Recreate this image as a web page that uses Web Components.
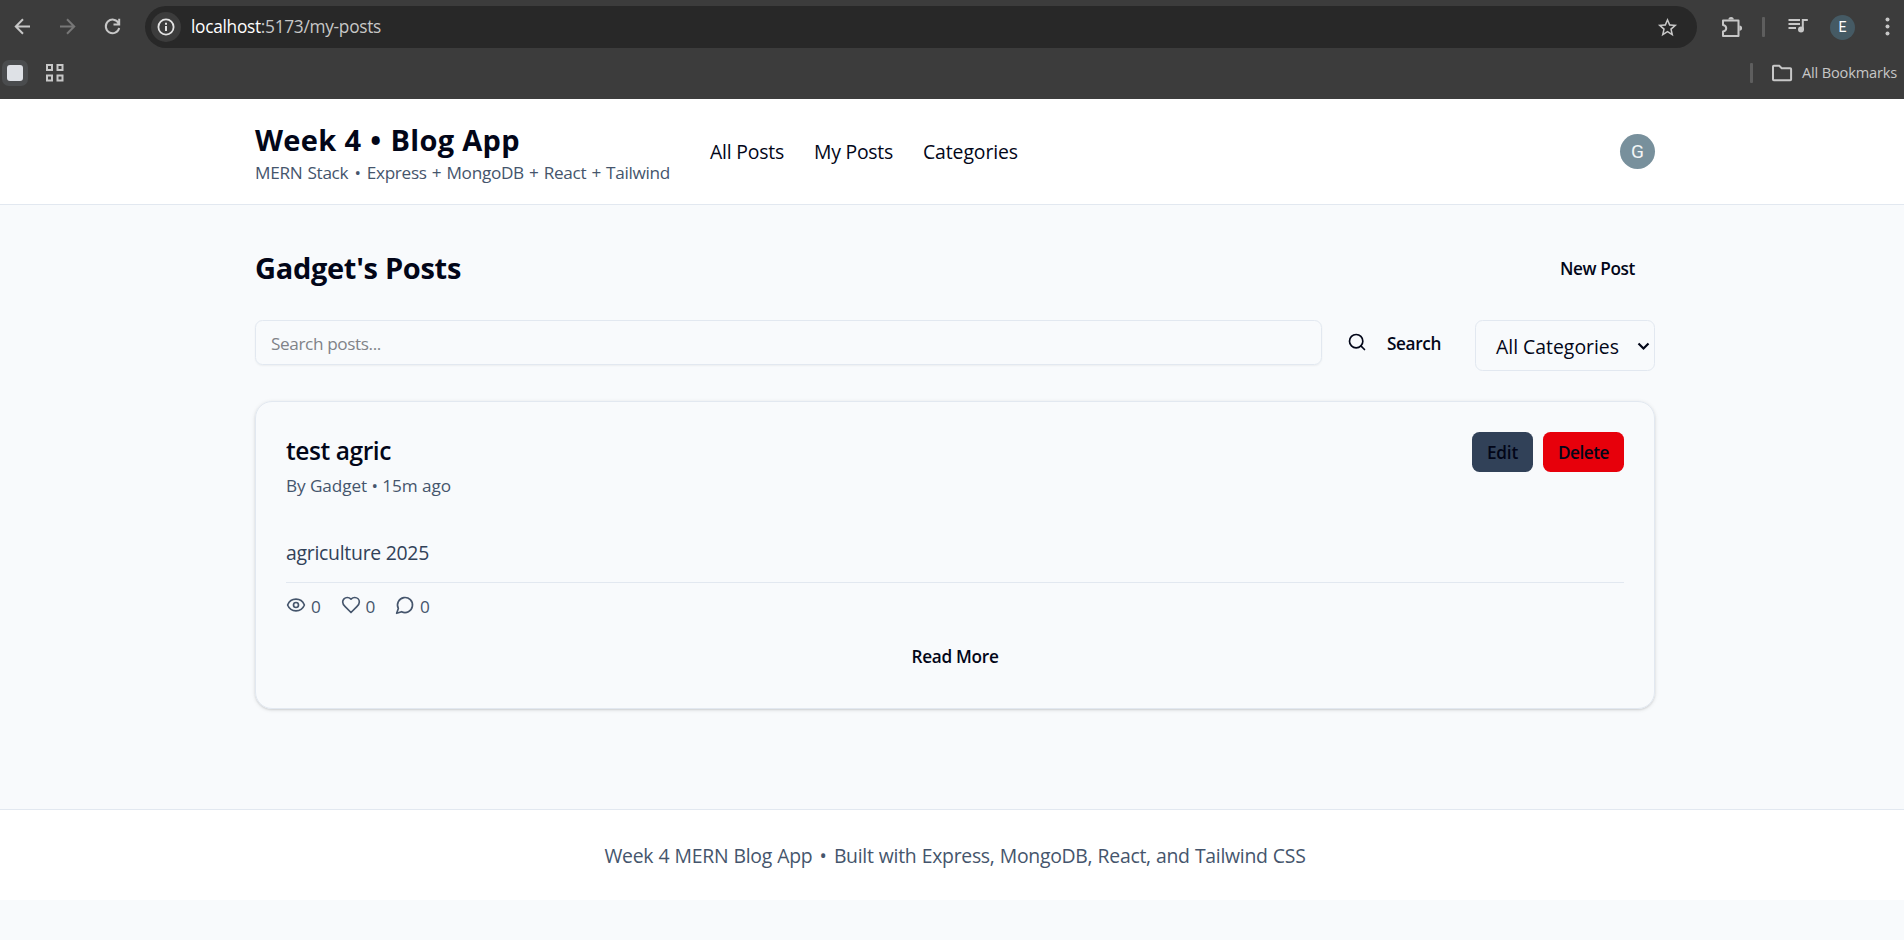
<!DOCTYPE html>
<html lang="en">
<head>
<meta charset="utf-8">
<title>My Posts</title>
<style>
html,body{margin:0;padding:0}
body{background:#f8fafc;color:#020618;font-family:"Open Sans","Noto Sans",sans-serif;height:940px;overflow:hidden}
</style>
</head>
<body>
<browser-bar></browser-bar>
<site-header></site-header>
<posts-page></posts-page>
<site-footer></site-footer>
<script>
const define = (name, html) => customElements.define(name, class extends HTMLElement {
  constructor() {
    super();
    this.attachShadow({ mode: 'open' }).innerHTML = html;
  }
});

/* One line of text: s = font size, l = line height, b = weight, w = line width reached by tracking. */
customElements.define('text-line', class extends HTMLElement {
  connectedCallback() {
    if (this.shadowRoot) return;
    const a = n => this.getAttribute(n);
    const root = this.attachShadow({ mode: 'open' });
    root.innerHTML = `<style>
      :host{display:block;flex:none;white-space:nowrap;width:${a('w')}px;font-size:${a('s') || 17.2}px;line-height:${a('l') || 25}px;font-weight:${a('b') || 400}}
      span{display:inline-block}
    </style><span><slot></slot></span>`;
    const span = root.querySelector('span');
    const gap = (a('w') - span.getBoundingClientRect().width) / this.textContent.length;
    span.style.letterSpacing = gap.toFixed(3) + 'px';
  }
});

const icons = {
  search: '<circle cx="11" cy="11" r="8"/><path d="m21 21-4.34-4.34"/>',
  eye: '<path d="M2.062 12.348a1 1 0 0 1 0-.696 10.75 10.75 0 0 1 19.876 0 1 1 0 0 1 0 .696 10.75 10.75 0 0 1-19.876 0"/><circle cx="12" cy="12" r="3"/>',
  heart: '<path d="M19 14c1.49-1.46 3-3.21 3-5.5A5.5 5.5 0 0 0 16.5 3c-1.76 0-3 .5-4.5 2-1.5-1.5-2.74-2-4.5-2A5.5 5.5 0 0 0 2 8.500c0 2.300 1.500 4.050 3 5.500l7 7Z"/>',
  comment: '<path d="M7.900 20A9 9 0 1 0 4 16.100L2 22Z"/>'
};
customElements.define('line-icon', class extends HTMLElement {
  connectedCallback() {
    if (this.shadowRoot) return;
    this.attachShadow({ mode: 'open' }).innerHTML = `<style>:host{display:block;flex:none;width:20px;height:20px}svg{display:block}</style>
      <svg width="20" height="20" viewBox="0 0 24 24" fill="none" stroke="currentColor" stroke-width="2" stroke-linecap="round" stroke-linejoin="round">${icons[this.getAttribute('name')]}</svg>`;
  }
});

define('round-avatar', `<style>
  :host{display:flex;flex:none;align-items:center;justify-content:center;border-radius:50%;color:#fff;font-family:Roboto,sans-serif}
</style><slot></slot>`);

define('browser-bar', `<style>
  :host{display:block;height:99px;background:#3c3c3c;color:#c7c7c7;box-sizing:border-box;padding-top:6px}
  svg{display:block;flex:none;fill:none;stroke:#c7c7c7;stroke-width:2}
  .row{display:flex;align-items:center}
  .tools{height:42px;padding-left:12px}
  .nav{display:flex;gap:24px;margin:0 22px 1px 0}
  .address{display:flex;align-items:center;box-sizing:border-box;width:1552px;height:42px;border-radius:21px;background:#282828;padding:0 18px 0 6px}
  .info{display:flex;align-items:center;justify-content:center;width:30px;height:30px;border-radius:50%;background:#3c3c3c;margin-right:10px}
  .address text-line{color:#c7c7c7;margin-bottom:1px}
  b{font-weight:400;color:#fff}
  .star{margin-left:auto}
  .sep{flex:none;width:3px;height:20px;border-radius:1px;background:#5e5e5e}
  round-avatar{width:25px;height:25px;background:#455a64;font-size:14px;margin:0 21px 0 20px}
  .marks{height:50px}
  .chip{display:flex;align-items:center;justify-content:center;width:26px;height:26px;border-radius:7px;background:#4a4c4e;margin:0 16px 0 2px}
  .chip i{width:16px;height:16px;border-radius:3px;background:#dee1e6}
  .folder{margin:0 9px 0 18px}
</style>
<div class="row tools">
  <div class="nav">
    <svg width="21" height="21" viewBox="0 0 21 21"><path d="M18 10.500H4.500M11 3.300 3.800 10.500 11 17.700"/></svg>
    <svg width="21" height="21" viewBox="0 0 21 21" style="stroke:#777"><path d="M3 10.500h13.500M10 3.300l7.200 7.200-7.200 7.200"/></svg>
    <svg width="21" height="21" viewBox="0 0 21 21"><path d="M16.600 7.200A6.800 6.800 0 1 0 17.200 12M17.200 2.800v5.600h-5.700"/></svg>
  </div>
  <div class="address">
    <div class="info"><svg width="18" height="18" viewBox="0 0 18 18" style="stroke:#e3e3e3"><circle cx="9" cy="9" r="7.600" stroke-width="1.800"/><path d="M9 8v5M9 4.800v2"/></svg></div>
    <text-line s="17.300" w="190"><b>localhost</b>:5173/my-posts</text-line>
    <svg class="star" width="23" height="23" viewBox="0 0 24 24" style="fill:#c7c7c7;stroke:none"><path d="M22 9.240l-7.190-.620L12 2 9.190 8.630 2 9.240l5.460 4.730L5.820 21 12 17.270 18.180 21l-1.630-7.030L22 9.240zM12 15.400l-3.760 2.270 1-4.280-3.320-2.880 4.380-.380L12 6.100l1.710 4.040 4.380.380-3.320 2.880 1 4.280L12 15.400z"/></svg>
  </div>
  <svg width="22" height="22" viewBox="0 0 22 22" style="margin:0 19px 0 24px"><path d="M2 4.500h15.500v15.500H2v-4.600c4.300-.800 4.300-5.700 0-6.500z" stroke-linejoin="round"/><path d="M7.400 3.600a2.700 2.700 0 0 1 5.400 0zM18.400 9.400a2.700 2.700 0 0 1 0 5.400z" fill="#c7c7c7" stroke="none"/></svg>
  <div class="sep"></div>
  <svg width="22" height="20" viewBox="0 0 22 20" style="margin-left:23px"><path d="M.500 3h11.500M.500 7h11.500M.500 11h7.500M14.800 13V3h5"/><circle cx="13" cy="12.500" r="3" fill="#c7c7c7" stroke="none"/></svg>
  <round-avatar>E</round-avatar>
  <svg width="22" height="20" viewBox="0 0 22 20" style="fill:#c7c7c7;stroke:none"><circle cx="11.500" cy="2.500" r="2"/><circle cx="11.500" cy="9.500" r="2"/><circle cx="11.500" cy="16.500" r="2"/></svg>
</div>
<div class="row marks">
  <div class="chip"><i></i></div>
  <svg width="20" height="20" viewBox="0 0 20 20" style="margin-left:1px"><path d="M2 2h5v5H2zM12.500 2h5v5h-5zM2 12.500h5v5H2zM12.500 12.500h5v5h-5z"/></svg>
  <div class="sep" style="margin-left:auto"></div>
  <svg class="folder" width="22" height="18" viewBox="0 0 22 18"><path d="M2 2.600q0-.800.800-.800h5.400l2.500 2.500h8.600q.800 0 .800.800v10.300q0 .800-.800.800H2.800q-.800 0-.800-.800z"/></svg>
  <text-line s="14.600" w="95" style="margin:0 7px 2px 0">All Bookmarks</text-line>
</div>`);

define('site-header', `<style>
  :host{display:block;background:#fff;border-bottom:1px solid #e2e8f0;padding-left:6px}
  header{box-sizing:border-box;width:1400px;height:105px;margin:auto;display:flex;align-items:center}
  .brand{display:flex;flex-direction:column;gap:5px;margin-right:40px;padding-top:6px}
  .sub{color:#45556c;word-spacing:1px}
  i{font-style:normal;margin:0 1px}
  nav{display:flex;gap:30px}
  round-avatar{width:35px;height:35px;background:#78909c;color:#f2f5f6;font-size:19px;margin-left:auto}
</style>
<header>
  <div class="brand"><text-line s="29" l="31" b="700" w="265">Week 4 <i>•</i> Blog App</text-line><text-line class="sub" w="415">MERN Stack <i>•</i> Express + MongoDB + React + Tailwind</text-line></div>
  <nav><text-line s="19.400" l="30" w="74">All Posts</text-line><text-line s="19.400" l="30" w="79">My Posts</text-line><text-line s="19.400" l="30" w="95">Categories</text-line></nav>
  <round-avatar>G</round-avatar>
</header>`);

define('post-card', `<style>
  :host{display:block;box-sizing:border-box;height:308px;border:1px solid #e2e8f0;border-radius:17px;padding:30px;box-shadow:0 1px 4px rgba(0,0,0,.1),0 1px 2px rgba(0,0,0,.1)}
  .top{display:flex;justify-content:space-between;height:66px}
  .head{padding-top:4px}
  .meta{color:#45556c;margin-top:7px}
  .actions{display:flex;gap:10px}
  .btn{box-sizing:border-box;height:40px;padding:8px 15px 0;border-radius:7.500px;background:#314158}
  .del{background:#e7000b}
  .body{color:#314158;margin-top:40px}
  .stats{display:flex;gap:20px;border-top:1px solid #e2e8f0;margin-top:14px;padding-top:11px;color:#45556c}
  .stat{display:flex;gap:5px}
  .stat line-icon{margin-top:1px}
  .more{display:flex;justify-content:center;margin-top:25px}
</style>
<div class="top">
  <div class="head"><text-line s="24.500" l="30" b="600" w="105">test agric</text-line><text-line class="meta" w="165">By Gadget • 15m ago</text-line></div>
  <div class="actions"><div class="btn"><text-line b="600" w="31">Edit</text-line></div><div class="btn del"><text-line b="600" w="51">Delete</text-line></div></div>
</div>
<text-line class="body" s="19.400" l="30" w="143">agriculture 2025</text-line>
<div class="stats">
  <div class="stat"><line-icon name="eye"></line-icon><text-line w="9.500">0</text-line></div>
  <div class="stat"><line-icon name="heart"></line-icon><text-line w="9.500">0</text-line></div>
  <div class="stat"><line-icon name="comment"></line-icon><text-line w="9.500">0</text-line></div>
</div>
<div class="more"><text-line b="600" w="87">Read More</text-line></div>`);

define('posts-page', `<style>
  :host{display:block;width:1400px;margin:auto;padding:40px 0 100px 6px}
  .title{display:flex;align-items:center;justify-content:space-between;height:45px;padding-right:20px}
  .filters{display:flex;align-items:flex-start;height:51px;margin:30px 0}
  .input,.select{box-sizing:border-box;border:1px solid #e2e8f0;border-radius:7.500px}
  .input{width:1067px;height:45px;padding:10px 15px 0;color:#808388;box-shadow:0 1px 2px rgba(0,0,0,.05)}
  .search{display:flex;align-items:center;gap:20px;height:45px;margin:0 34px 0 25px}
  .search line-icon{margin-bottom:1px}
  .select{display:flex;justify-content:space-between;width:180px;height:51px;padding:11px 4px 0 20px}
  .select svg{margin-top:8px}
</style>
<div class="title"><text-line s="29" l="36" b="700" w="206">Gadget's Posts</text-line><text-line b="600" w="75" style="padding-top:2px">New Post</text-line></div>
<div class="filters">
  <div class="input"><text-line w="110">Search posts...</text-line></div>
  <div class="search"><line-icon name="search"></line-icon><text-line b="600" w="54" style="padding-top:1px">Search</text-line></div>
  <div class="select"><text-line s="19.400" l="30" w="123">All Categories</text-line><svg width="13" height="13" viewBox="0 0 13 13" fill="none" stroke="#020618" stroke-width="2.200"><path d="m1.500 3.500 5 5 5-5"/></svg></div>
</div>
<post-card></post-card>`);

define('site-footer', `<style>
  :host{display:flex;justify-content:center;border-top:1px solid #e2e8f0;background:#fff;padding:31px 0 29px 6px;color:#45556c;word-spacing:.500px}
  i{font-style:normal;margin:0 2px}
</style><text-line s="19.400" l="30" w="701">Week 4 MERN Blog App <i>•</i> Built with Express, MongoDB, React, and Tailwind CSS</text-line>`);
</script>
</body>
</html>
